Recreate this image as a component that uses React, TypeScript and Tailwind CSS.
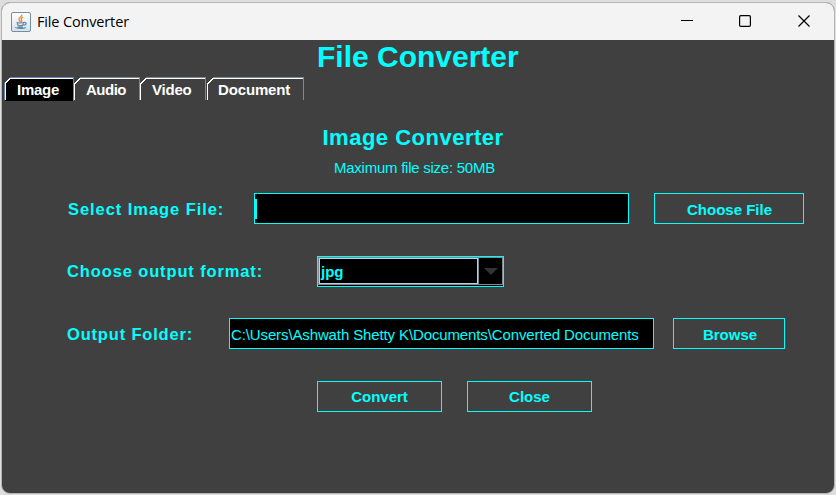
import React from "react";

const font = "font-['Liberation_Sans',Arial,sans-serif]";

function Tab({ label, width, textClass, active = false }: { label: string; width: number; textClass: string; active?: boolean }) {
  const edge = active ? "#6382bf" : "#7a8a99";
  const bottom = active ? 24 : 23;
  return (
    <button className="grid h-6 shrink-0 text-left" style={{ width }}>
      <svg className="col-start-1 row-start-1" width={width} height="24" shapeRendering="crispEdges" fill="none">
        {active && <path d={`M1 24V6L7 1H${width - 1}V24Z`} fill="#000" />}
        <path d={`M6 .5H${width - .5}V${bottom}`} stroke={edge} />
        <path d={`M7 1.5H${width - 1}`} stroke="#fff" />
        {active && <path d="M.5 6V23" stroke={edge} />}
        <path d={active ? "M1.5 23V6" : "M.5 23V6"} stroke="#fff" />
        <path d="M1 6.5L6.5 1" stroke="#fff" strokeWidth="1.6" />
      </svg>
      <span className={`col-start-1 row-start-1 pt-1 text-[15px] leading-[17px] font-bold text-white ${textClass}`}>{label}</span>
    </button>
  );
}

function Button({ children, className }: { children: React.ReactNode; className: string }) {
  return (
    <button className={`flex h-[31px] shrink-0 items-center justify-center border border-[#00ffff] text-[15px] leading-[17px] font-bold ${className}`}>
      {children}
    </button>
  );
}

function JavaIcon() {
  return (
    <svg width="20" height="20" viewBox="0 0 20 20" fill="none">
      <defs>
        <linearGradient id="tile" x1="0" y1="0" x2="0" y2="1">
          <stop stopColor="#fff" />
          <stop offset="1" stopColor="#d5e0ea" />
        </linearGradient>
      </defs>
      <rect x=".5" y=".5" width="19" height="19" rx="1.5" fill="url(#tile)" stroke="#738da2" />
      <path d="M10.8 2.5C11.7 4.5 7.1 5.4 8 7.6C8.3 8.5 9.2 9 9.4 9.8M12.2 5.2C9.7 6.1 9.9 7.1 10.6 8.1C11 8.8 10.6 9.4 10.1 10" stroke="#ee8c3b" strokeWidth="1.4" />
      <path d="M5.6 10.3C7 11.2 11.5 11.1 13.1 10.3M6.3 11.2C6.3 14.5 12.4 14.5 12.5 11.2M13.1 10.6C16.2 9.8 15.6 13.1 12.7 13.2M7 13.1C8.5 13.9 10.4 13.8 12 13.1M4.4 15C4 16.8 13.5 17 14.8 15.3M6.4 15.2H12.1" stroke="#658aa6" strokeWidth="1.2" />
    </svg>
  );
}

export default function App() {
  return (
    <div className={`h-[495px] w-[836px] bg-[#dedede] px-px pt-[2px] pb-px ${font}`}>
      <div className="flex h-[492px] w-[834px] flex-col overflow-hidden rounded-[9px] border border-[#b5b5b5] bg-[#404040] text-[#00ffff]">
        <header className="flex h-[37px] shrink-0 items-center bg-[#f3f3f3] pl-[9px] text-black">
          <JavaIcon />
          <span className="ml-[6px] flex-1 font-['Open_Sans','Noto_Sans',sans-serif] text-[14.5px] leading-5 tracking-[-0.15px]">File Converter</span>
          <div className="flex gap-[46px] pr-6 pb-px">
            <svg width="12" height="12" stroke="#000" fill="none"><path d="M0 5.5H12" /></svg>
            <svg width="12" height="12" stroke="#000" strokeWidth="1.2" fill="none"><rect x=".6" y=".6" width="10.8" height="10.8" rx="1.2" /></svg>
            <svg className="ml-px" width="12" height="12" stroke="#000" strokeWidth="1.2" fill="none"><path d="M.5 .5L11.5 11.5M11.5 .5L.5 11.5" /></svg>
          </div>
        </header>

        <h1 className="h-[37px] shrink-0 pl-[315px] text-[30px] leading-[34px] font-bold whitespace-nowrap">File Converter</h1>

        <nav className="flex h-6 shrink-0 pl-[2px]">
          <Tab label="Image" width={70} textClass="pl-[13px] tracking-[-0.25px]" active />
          <Tab label="Audio" width={66} textClass="pl-3 tracking-[-0.5px]" />
          <Tab label="Video" width={66} textClass="pl-3 tracking-[-0.2px]" />
          <div className="w-px" />
          <Tab label="Document" width={97} textClass="pl-[11px] tracking-[-0.15px]" />
        </nav>

        <main className="flex flex-col whitespace-nowrap">
          <h2 className="mt-[25px] pl-[320.5px] text-[22px] leading-6 font-bold tracking-[0.5px]">Image Converter</h2>
          <p className="mt-[9px] pl-[332px] text-[15px] leading-[17px] tracking-[-0.25px]">Maximum file size: 50MB</p>

          <div className="mt-[17px] flex h-[31px] items-center pl-[66px]">
            <label className="w-[186px] text-[16.5px] leading-[18px] font-bold tracking-[0.94px]">Select Image File:</label>
            <div className="flex h-[31px] w-[375px] items-center border border-[#00ffff] bg-black">
              <span className="h-5 w-[2px] bg-[#00ffff]" />
            </div>
            <Button className="ml-[25px] w-[150px] pt-[2px] pl-px">Choose File</Button>
          </div>

          <div className="mt-8 flex h-[31px] items-center pl-[65px]">
            <label className="w-[250px] pb-[2px] text-[16.5px] leading-[18px] font-bold tracking-[0.87px]">Choose output format:</label>
            <div className="h-[31px] w-[187px] border border-[#00ffff] bg-black pb-px">
              <div className="flex h-7 border border-[#7a8a99]">
                <div className="flex w-[159px] items-center border border-[#b8cfe5] pt-px pl-px text-[15px] leading-[17px] font-bold">jpg</div>
                <div className="flex flex-1 items-center justify-center border-l border-[#7a8a99]">
                  <svg width="14" height="7"><path d="M0 0H14L7 7Z" fill="#333" /></svg>
                </div>
              </div>
            </div>
          </div>

          <div className="mt-[31px] flex h-[31px] items-center pl-[65px]">
            <label className="w-[162px] text-[16.5px] leading-[18px] font-bold tracking-[0.82px]">Output Folder:</label>
            <div className="h-[31px] w-[425px] border border-[#00ffff] bg-black pt-[7px] pl-px text-[15px] leading-[17px] tracking-[-0.12px]">
              C:\Users\Ashwath Shetty K\Documents\Converted Documents
            </div>
            <Button className="ml-[19px] w-[112px] pt-[2px] pl-[2px]">Browse</Button>
          </div>

          <div className="mt-8 flex gap-[25px] pl-[315px]">
            <Button className="w-[125px]">Convert</Button>
            <Button className="w-[125px]">Close</Button>
          </div>
        </main>
      </div>
    </div>
  );
}
